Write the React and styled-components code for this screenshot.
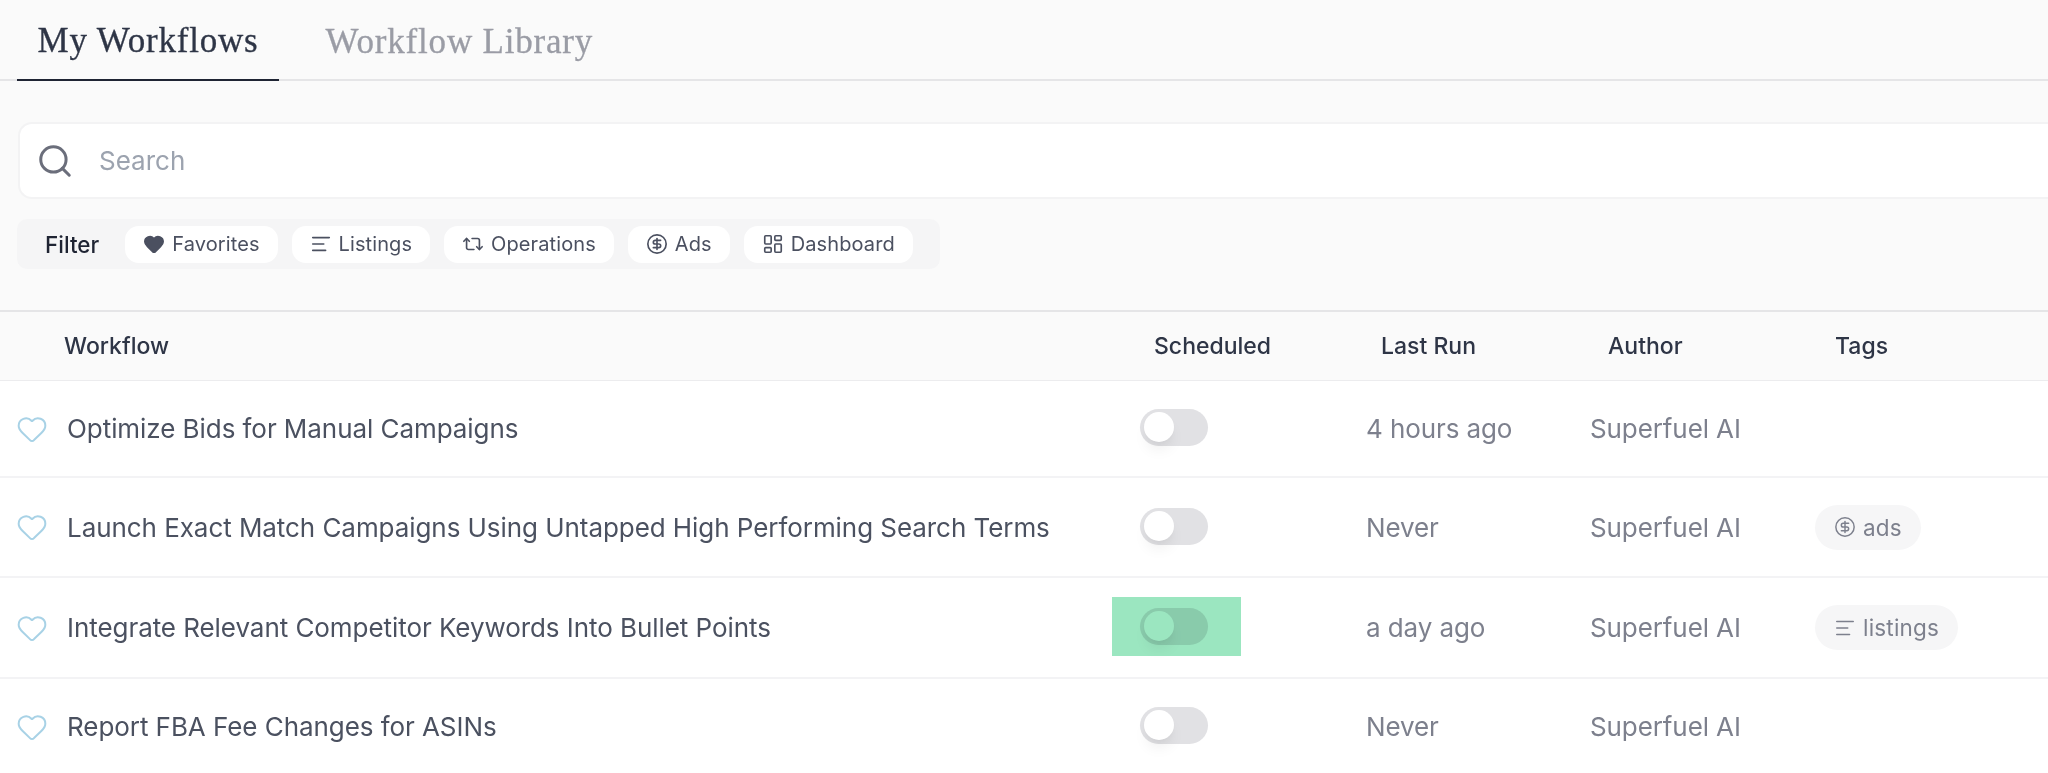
import React from "react";
import styled, { createGlobalStyle } from "styled-components";
import { AlignLeft, CircleDollarSign, Heart, LayoutDashboard, Repeat2, Search } from "lucide-react";

const Global = createGlobalStyle`
  html, body { margin: 0; padding: 0; background: #fafafa; height: 100%; overflow: hidden; }
  body { font-family: Inter, "Liberation Sans", sans-serif; }
`;

const Page = styled.div`
  width: 2048px;
  height: 773px;
  overflow: hidden;
  background: #fafafa;
`;

const Tabs = styled.nav`
  display: flex;
  height: 81px;
  box-sizing: border-box;
  padding-left: 17px;
  gap: 26px;
  border-bottom: 2px solid #e5e5e7;
`;

const Tab = styled.div`
  height: 81px;
  box-sizing: border-box;
  padding: 3px 20.5px 0;
  display: flex;
  align-items: center;
  font-family: "Liberation Serif", serif;
  font-size: 35px;
  letter-spacing: 0.8px;
  -webkit-text-stroke: 0.3px currentColor;
  color: ${(p) => (p.$active ? "#2e3546" : "#9a9ca5")};
  border-bottom: ${(p) => (p.$active ? "2px solid #1f2433" : "none")};
`;

const Controls = styled.div`
  padding: 41px 0 0 17px;
  height: 231px;
  box-sizing: border-box;
  border-bottom: 2px solid #e5e5e7;
`;

const SearchBox = styled.div`
  margin-left: 1px;
  height: 77px;
  box-sizing: border-box;
  display: flex;
  align-items: center;
  gap: 25px;
  padding-left: 16px;
  background: #fff;
  border: 2px solid #f3f3f4;
  border-right: none;
  border-radius: 14px 0 0 14px;
  color: #6b6e7b;
`;

const SearchText = styled.span`
  font-size: 26px;
  color: #9ca3af;
`;

const FilterBar = styled.div`
  margin-top: 20px;
  width: 923px;
  height: 50px;
  box-sizing: border-box;
  display: flex;
  align-items: center;
  gap: 14px;
  padding-left: 28px;
  background: #f5f5f6;
  border-radius: 10px;
`;

const FilterLabel = styled.span`
  font-size: 22.5px;
  font-weight: 500;
  color: #1f2433;
  margin-right: 12px;
`;

const Pill = styled.div`
  height: 37px;
  box-sizing: border-box;
  display: flex;
  align-items: center;
  gap: 7px;
  padding: 0 18px;
  background: #fff;
  border-radius: 14px;
  font-size: 20px;
  letter-spacing: 0.1px;
  color: #4b5060;
`;

const HeaderRow = styled.div`
  display: grid;
  grid-template-columns: 1090px 227px 227px 227px 1fr;
  align-items: center;
  height: 69px;
  box-sizing: border-box;
  padding-left: 64px;
  background: #fafafa;
  border-bottom: 1px solid #ececee;
`;

const HeaderCell = styled.div`
  font-size: 23px;
  font-weight: 500;
  color: #2e3546;
`;

const Row = styled.div`
  display: grid;
  grid-template-columns: 49px 1073px 226px 224px 225px 1fr;
  align-items: center;
  height: ${(p) => p.$h}px;
  box-sizing: border-box;
  padding-left: 18px;
  background: #fff;
  border-bottom: 2px solid #f3f3f5;
  &:last-child {
    border-bottom: none;
  }
`;

const HeartCell = styled.div`
  display: flex;
  align-items: center;
  color: #a8d2e6;
  margin-left: -2px;
`;

const Name = styled.div`
  font-size: 26px;
  letter-spacing: -0.06px;
  color: #4b5160;
`;

const Muted = styled.div`
  font-size: 26px;
  letter-spacing: -0.1px;
  color: #7d808d;
`;

const ToggleCell = styled.div`
  position: relative;
  display: flex;
  margin-top: -2px;
`;

const Toggle = styled.div`
  width: 68px;
  height: 37px;
  box-sizing: border-box;
  padding: 3px 4px;
  background: #e1e1e4;
  border-radius: 19px;
`;

const Knob = styled.div`
  width: 30px;
  height: 30px;
  border-radius: 50%;
  background: #fff;
  box-shadow: 0 10px 15px -3px rgba(0, 0, 0, 0.07), 0 4px 6px -2px rgba(0, 0, 0, 0.03);
`;

const Highlight = styled.div`
  position: absolute;
  left: -28px;
  top: -11px;
  width: 129px;
  height: 59px;
  background: #9be6c0;
  mix-blend-mode: multiply;
`;

const Tag = styled.div`
  display: inline-flex;
  align-items: center;
  gap: 7px;
  height: 45px;
  box-sizing: border-box;
  padding: 0 19px;
  background: #f6f6f7;
  border-radius: 23px;
  font-size: 22.5px;
  letter-spacing: 0.2px;
  color: #7d808d;
`;

const rows = [
  { name: "Optimize Bids for Manual Campaigns", last: "4 hours ago", h: 97 },
  { name: "Launch Exact Match Campaigns Using Untapped High Performing Search Terms", last: "Never", h: 100, tag: "ads" },
  { name: "Integrate Relevant Competitor Keywords Into Bullet Points", last: "a day ago", h: 101, tag: "listings", marked: true },
  { name: "Report FBA Fee Changes for ASINs", last: "Never", h: 95 },
];

const tagIcons = { ads: CircleDollarSign, listings: AlignLeft };

const filters = [
  { label: "Favorites", Icon: Heart, fill: "#4b5060" },
  { label: "Listings", Icon: AlignLeft },
  { label: "Operations", Icon: Repeat2 },
  { label: "Ads", Icon: CircleDollarSign },
  { label: "Dashboard", Icon: LayoutDashboard },
];

export default function App() {
  return (
    <Page>
      <Global />
      <Tabs>
        <Tab $active>My Workflows</Tab>
        <Tab>Workflow Library</Tab>
      </Tabs>
      <Controls>
        <SearchBox>
          <Search size={38} strokeWidth={1.9} />
          <SearchText>Search</SearchText>
        </SearchBox>
        <FilterBar>
          <FilterLabel>Filter</FilterLabel>
          {filters.map(({ label, Icon, fill }) => (
            <Pill key={label}>
              <Icon size={22} strokeWidth={1.8} fill={fill || "none"} />
              {label}
            </Pill>
          ))}
        </FilterBar>
      </Controls>
      <HeaderRow>
        {["Workflow", "Scheduled", "Last Run", "Author", "Tags"].map((h) => (
          <HeaderCell key={h}>{h}</HeaderCell>
        ))}
      </HeaderRow>
      {rows.map((r) => {
        const TagIcon = r.tag && tagIcons[r.tag];
        return (
          <Row key={r.name} $h={r.h}>
            <HeartCell>
              <Heart size={32} strokeWidth={1.5} />
            </HeartCell>
            <Name>{r.name}</Name>
            <ToggleCell>
              <Toggle>
                <Knob />
              </Toggle>
              {r.marked && <Highlight />}
            </ToggleCell>
            <Muted>{r.last}</Muted>
            <Muted>Superfuel AI</Muted>
            <div>
              {r.tag && (
                <Tag>
                  <TagIcon size={22} strokeWidth={1.6} />
                  {r.tag}
                </Tag>
              )}
            </div>
          </Row>
        );
      })}
    </Page>
  );
}
